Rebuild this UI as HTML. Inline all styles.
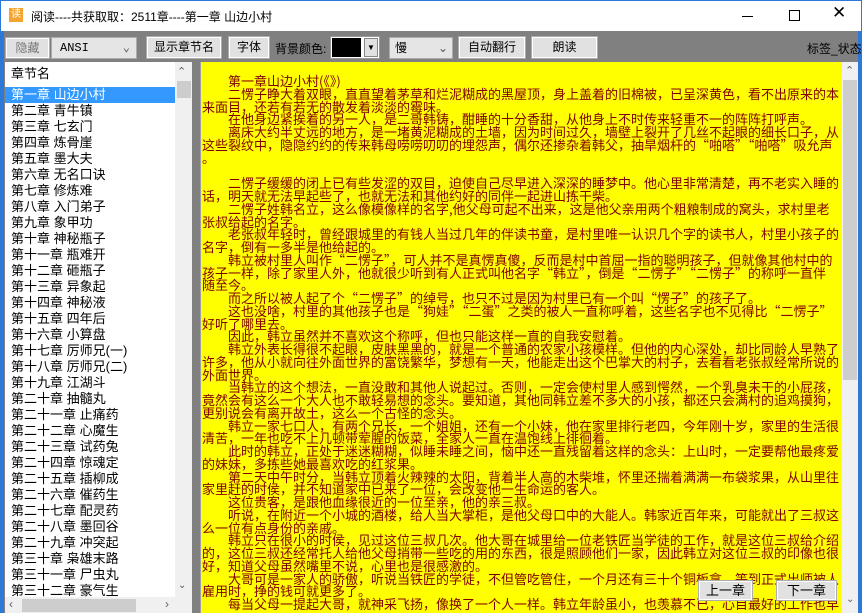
<!DOCTYPE html>
<html><head><meta charset="utf-8">
<style>
*{margin:0;padding:0;box-sizing:border-box}
body{width:862px;height:613px;overflow:hidden;background:#808080;font-family:"Liberation Sans","Noto Sans CJK SC",sans-serif;position:relative}
.abs{position:absolute}
#title{left:0;top:0;width:862px;height:31px;background:#fff;border:1px solid #2b79d8;border-bottom:none}
#title .t{left:30px;top:7px;font-size:12px;color:#000;white-space:nowrap}
.btn{position:absolute;background:#e1e1e1;border:1px solid #adadad;box-shadow:inset 0 0 0 1px #fff;font-size:12px;text-align:center;color:#000;font-family:"Liberation Sans","Noto Sans CJK SC",sans-serif}
.combo{position:absolute;background:#e5e5e5;border:1px solid #acacac;font-size:12px;color:#000}
#list{left:5px;top:62px;width:187px;height:551px;background:#fff}
#list .it{position:absolute;left:6px;font-size:13px;height:16px;line-height:16px;white-space:nowrap;color:#000}
#text{left:200px;top:62px;width:642px;height:551px;background:#ff0;border-left:1px solid #a0a0a0;overflow:hidden}
#text .l{position:absolute;left:1px;font-family:"WenQuanYi Zen Hei","Noto Sans CJK SC",sans-serif;font-size:13px;line-height:13px;color:#800000;white-space:pre}
</style></head><body>
<div id="title" class="abs">
 <div class="abs" style="left:8px;top:7px;width:14px;height:14px;background:#f3a530"></div>
 <div class="abs" style="left:10px;top:9px;font-size:10px;color:#fff;line-height:10px">读</div>
 <div class="abs t">阅读----共获取取：2511章----第一章 山边小村</div>
 <div class="abs" style="left:741px;top:15px;width:11px;height:1px;background:#000"></div>
 <div class="abs" style="left:788px;top:9px;width:11px;height:11px;border:1px solid #000"></div>
 <div class="abs" style="left:831px;top:2px;font-size:17px;color:#000">✕</div>
</div>
<div class="abs" style="left:0;top:31px;width:4px;height:582px;background:#2b79d8"></div>
<div class="abs" style="left:858px;top:31px;width:4px;height:582px;background:#2b79d8"></div>

<div class="btn" style="left:5px;top:37px;width:45px;height:22px;line-height:20px;color:#777">隐藏</div>
<div class="combo" style="left:51px;top:37px;width:86px;height:22px;line-height:20px;padding-left:8px;font-family:'Liberation Mono',monospace">ANSI<span style="position:absolute;right:6px;top:0;color:#555">⌄</span></div>
<div class="btn" style="left:146px;top:36px;width:76px;height:23px;line-height:21px">显示章节名</div>
<div class="btn" style="left:228px;top:36px;width:42px;height:23px;line-height:21px">字体</div>
<div class="abs" style="left:275px;top:40px;font-size:12px;color:#000">背景颜色:</div>
<div class="abs" style="left:330px;top:36px;width:50px;height:23px;background:#fff;border:1px solid #999"></div>
<div class="abs" style="left:332px;top:38px;width:29px;height:19px;background:#000"></div>
<div class="abs" style="left:364px;top:38px;width:14px;height:19px;background:#e1e1e1;border:1px solid #888;font-size:8px;text-align:center;line-height:17px">▼</div>
<div class="combo" style="left:389px;top:37px;width:64px;height:22px;line-height:20px;padding-left:5px">慢<span style="position:absolute;right:4px;top:0;color:#555">⌄</span></div>
<div class="btn" style="left:458px;top:36px;width:68px;height:23px;line-height:21px">自动翻行</div>
<div class="btn" style="left:531px;top:36px;width:67px;height:23px;line-height:21px">朗读</div>
<div class="abs" style="left:807px;top:40px;font-size:12px;color:#000;white-space:nowrap">标签_状态</div>

<div id="list" class="abs">
 <div class="it" style="top:4px">章节名</div>
 <div class="abs" style="left:0;top:25px;width:170px;height:16px;background:#3399ff"></div>
 <div class="it" style="top:25px;color:#fff">第一章 山边小村</div>
 <div class="it" style="top:41px">第二章 青牛镇</div>
 <div class="it" style="top:57px">第三章 七玄门</div>
 <div class="it" style="top:73px">第四章 炼骨崖</div>
 <div class="it" style="top:89px">第五章 墨大夫</div>
 <div class="it" style="top:105px">第六章 无名口诀</div>
 <div class="it" style="top:121px">第七章 修炼难</div>
 <div class="it" style="top:137px">第八章 入门弟子</div>
 <div class="it" style="top:153px">第九章 象甲功</div>
 <div class="it" style="top:169px">第十章 神秘瓶子</div>
 <div class="it" style="top:185px">第十一章 瓶难开</div>
 <div class="it" style="top:201px">第十二章 砸瓶子</div>
 <div class="it" style="top:217px">第十三章 异象起</div>
 <div class="it" style="top:233px">第十四章 神秘液</div>
 <div class="it" style="top:249px">第十五章 四年后</div>
 <div class="it" style="top:265px">第十六章 小算盘</div>
 <div class="it" style="top:281px">第十七章 厉师兄(一)</div>
 <div class="it" style="top:297px">第十八章 厉师兄(二)</div>
 <div class="it" style="top:313px">第十九章 江湖斗</div>
 <div class="it" style="top:329px">第二十章 抽髓丸</div>
 <div class="it" style="top:345px">第二十一章 止痛药</div>
 <div class="it" style="top:361px">第二十二章 心魔生</div>
 <div class="it" style="top:377px">第二十三章 试药兔</div>
 <div class="it" style="top:393px">第二十四章 惊魂定</div>
 <div class="it" style="top:409px">第二十五章 插柳成</div>
 <div class="it" style="top:425px">第二十六章 催药生</div>
 <div class="it" style="top:441px">第二十七章 配灵药</div>
 <div class="it" style="top:457px">第二十八章 墨回谷</div>
 <div class="it" style="top:473px">第二十九章 冲突起</div>
 <div class="it" style="top:489px">第三十章 枭雄末路</div>
 <div class="it" style="top:505px">第三十一章 尸虫丸</div>
 <div class="it" style="top:521px">第三十二章 豪气生</div>
 <div class="abs" style="left:170px;top:0;width:17px;height:535px;background:#f0f0f0"></div>
 <div class="abs" style="left:172px;top:3px;font-size:11px;color:#606060">⌃</div>
 <div class="abs" style="left:172px;top:19px;width:14px;height:17px;background:#cdcdcd"></div>
 <div class="abs" style="left:173px;top:518px;font-size:10px;color:#606060">⌄</div>
 <div class="abs" style="left:0;top:535px;width:187px;height:16px;background:#f0f0f0"></div>
 <div class="abs" style="left:17px;top:537px;width:114px;height:13px;background:#cdcdcd"></div>
 <div class="abs" style="left:4px;top:535px;font-size:12px;color:#606060">‹</div>
 <div class="abs" style="left:160px;top:535px;font-size:12px;color:#606060">›</div>
</div>

<div id="text" class="abs">
<div class="l" style="top:12px">　　第一章山边小村(《》)</div>
<div class="l" style="top:25px">　　二愣子睁大着双眼，直直望着茅草和烂泥糊成的黑屋顶，身上盖着的旧棉被，已呈深黄色，看不出原来的本</div>
<div class="l" style="top:38px">来面目，还若有若无的散发着淡淡的霉味。</div>
<div class="l" style="top:50px">　　在他身边紧挨着的另一人，是二哥韩铸，酣睡的十分香甜，从他身上不时传来轻重不一的阵阵打呼声。</div>
<div class="l" style="top:63px">　　离床大约半丈远的地方，是一堵黄泥糊成的土墙，因为时间过久，墙壁上裂开了几丝不起眼的细长口子，从</div>
<div class="l" style="top:76px">这些裂纹中，隐隐约约的传来韩母唠唠叨叨的埋怨声，偶尔还掺杂着韩父，抽旱烟杆的“啪嗒”“啪嗒”吸允声</div>
<div class="l" style="top:89px">。</div>
<div class="l" style="top:114px">　　二愣子缓缓的闭上已有些发涩的双目，迫使自己尽早进入深深的睡梦中。他心里非常清楚，再不老实入睡的</div>
<div class="l" style="top:127px">话，明天就无法早起些了，也就无法和其他约好的同伴一起进山拣干柴。</div>
<div class="l" style="top:140px">　　二愣子姓韩名立，这么像模像样的名字,他父母可起不出来，这是他父亲用两个粗粮制成的窝头，求村里老</div>
<div class="l" style="top:153px">张叔给起的名字。</div>
<div class="l" style="top:165px">　　老张叔年轻时，曾经跟城里的有钱人当过几年的伴读书童，是村里唯一认识几个字的读书人，村里小孩子的</div>
<div class="l" style="top:178px">名字，倒有一多半是他给起的。</div>
<div class="l" style="top:191px">　　韩立被村里人叫作“二愣子”，可人并不是真愣真傻，反而是村中首屈一指的聪明孩子，但就像其他村中的</div>
<div class="l" style="top:204px">孩子一样，除了家里人外，他就很少听到有人正式叫他名字“韩立”，倒是“二愣子”“二愣子”的称呼一直伴</div>
<div class="l" style="top:216px">随至今。</div>
<div class="l" style="top:229px">　　而之所以被人起了个“二愣子”的绰号，也只不过是因为村里已有一个叫“愣子”的孩子了。</div>
<div class="l" style="top:242px">　　这也没啥，村里的其他孩子也是“狗娃”“二蛋”之类的被人一直称呼着，这些名字也不见得比“二愣子”</div>
<div class="l" style="top:255px">好听了哪里去。</div>
<div class="l" style="top:267px">　　因此，韩立虽然并不喜欢这个称呼，但也只能这样一直的自我安慰着。</div>
<div class="l" style="top:280px">　　韩立外表长得很不起眼，皮肤黑黑的，就是一个普通的农家小孩模样。但他的内心深处，却比同龄人早熟了</div>
<div class="l" style="top:293px">许多，他从小就向往外面世界的富饶繁华，梦想有一天，他能走出这个巴掌大的村子，去看看老张叔经常所说的</div>
<div class="l" style="top:306px">外面世界。</div>
<div class="l" style="top:318px">　　当韩立的这个想法，一直没敢和其他人说起过。否则，一定会使村里人感到愕然，一个乳臭未干的小屁孩，</div>
<div class="l" style="top:331px">竟然会有这么一个大人也不敢轻易想的念头。要知道，其他同韩立差不多大的小孩，都还只会满村的追鸡摸狗，</div>
<div class="l" style="top:344px">更别说会有离开故土，这么一个古怪的念头。</div>
<div class="l" style="top:357px">　　韩立一家七口人，有两个兄长，一个姐姐，还有一个小妹，他在家里排行老四，今年刚十岁，家里的生活很</div>
<div class="l" style="top:369px">清苦，一年也吃不上几顿带荤腥的饭菜，全家人一直在温饱线上徘徊着。</div>
<div class="l" style="top:382px">　　此时的韩立，正处于迷迷糊糊，似睡未睡之间，恼中还一直残留着这样的念头：上山时，一定要帮他最疼爱</div>
<div class="l" style="top:395px">的妹妹，多拣些她最喜欢吃的红浆果。</div>
<div class="l" style="top:408px">　　第二天中午时分，当韩立顶着火辣辣的太阳，背着半人高的木柴堆，怀里还揣着满满一布袋浆果，从山里往</div>
<div class="l" style="top:420px">家里赶的时侯，并不知道家中已来了一位，会改变他一生命运的客人。</div>
<div class="l" style="top:433px">　　这位贵客，是跟他血缘很近的一位至亲，他的亲三叔。</div>
<div class="l" style="top:446px">　　听说，在附近一个小城的酒楼，给人当大掌柜，是他父母口中的大能人。韩家近百年来，可能就出了三叔这</div>
<div class="l" style="top:459px">么一位有点身份的亲戚。</div>
<div class="l" style="top:471px">　　韩立只在很小的时侯，见过这位三叔几次。他大哥在城里给一位老铁匠当学徒的工作，就是这位三叔给介绍</div>
<div class="l" style="top:484px">的，这位三叔还经常托人给他父母捎带一些吃的用的东西，很是照顾他们一家，因此韩立对这位三叔的印像也很</div>
<div class="l" style="top:497px">好，知道父母虽然嘴里不说，心里也是很感激的。</div>
<div class="l" style="top:510px">　　大哥可是一家人的骄傲，听说当铁匠的学徒，不但管吃管住，一个月还有三十个铜板拿，等到正式出师被人</div>
<div class="l" style="top:522px">雇用时，挣的钱可就更多了。</div>
<div class="l" style="top:535px">　　每当父母一提起大哥，就神采飞扬，像换了一个人一样。韩立年龄虽小，也羡慕不已，心目最好的工作也早</div>
<div class="btn" style="left:497px;top:518px;width:55px;height:21px;line-height:19px;font-size:13px;background:#e1e1e1">上一章</div>
<div class="btn" style="left:575px;top:518px;width:61px;height:21px;line-height:19px;font-size:13px;background:#e1e1e1">下一章</div>
</div>
<div class="abs" style="left:842px;top:62px;width:16px;height:551px;background:#f0f0f0"></div>
<div class="abs" style="left:845px;top:64px;font-size:11px;color:#606060">⌃</div>
<div class="abs" style="left:843px;top:80px;width:14px;height:300px;background:#cdcdcd"></div>
<div class="abs" style="left:846px;top:594px;font-size:10px;color:#606060">⌄</div>
</body></html>
